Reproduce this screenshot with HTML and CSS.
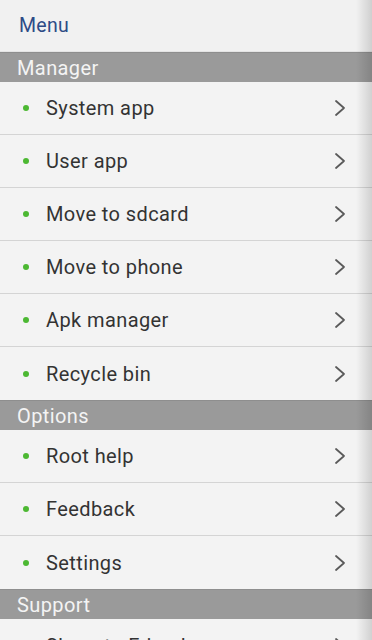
FILE: index.html
```html
<!DOCTYPE html>
<html lang="en">
<head>
    <meta charset="UTF-8">
    <meta name="viewport" content="width=device-width, initial-scale=1.0">
    <title>Menu</title>
    <link rel="stylesheet" href="styles.css">
</head>
<body>
    <div class="drawer">
        <div class="drawer-title">Menu</div>

        <div class="section">Manager</div>
        <ul class="menu">
            <li class="item"><span class="dot"></span><span class="label">System app</span><svg class="chevron" viewBox="0 0 12 18"><path d="M2 2 L10 9 L2 16"/></svg></li>
            <li class="item"><span class="dot"></span><span class="label">User app</span><svg class="chevron" viewBox="0 0 12 18"><path d="M2 2 L10 9 L2 16"/></svg></li>
            <li class="item"><span class="dot"></span><span class="label">Move to sdcard</span><svg class="chevron" viewBox="0 0 12 18"><path d="M2 2 L10 9 L2 16"/></svg></li>
            <li class="item"><span class="dot"></span><span class="label">Move to phone</span><svg class="chevron" viewBox="0 0 12 18"><path d="M2 2 L10 9 L2 16"/></svg></li>
            <li class="item"><span class="dot"></span><span class="label">Apk manager</span><svg class="chevron" viewBox="0 0 12 18"><path d="M2 2 L10 9 L2 16"/></svg></li>
            <li class="item"><span class="dot"></span><span class="label">Recycle bin</span><svg class="chevron" viewBox="0 0 12 18"><path d="M2 2 L10 9 L2 16"/></svg></li>
        </ul>

        <div class="section">Options</div>
        <ul class="menu">
            <li class="item"><span class="dot"></span><span class="label">Root help</span><svg class="chevron" viewBox="0 0 12 18"><path d="M2 2 L10 9 L2 16"/></svg></li>
            <li class="item"><span class="dot"></span><span class="label">Feedback</span><svg class="chevron" viewBox="0 0 12 18"><path d="M2 2 L10 9 L2 16"/></svg></li>
            <li class="item"><span class="dot"></span><span class="label">Settings</span><svg class="chevron" viewBox="0 0 12 18"><path d="M2 2 L10 9 L2 16"/></svg></li>
        </ul>

        <div class="section">Support</div>
        <ul class="menu">
            <li class="item"><span class="dot"></span><span class="label">Share to Friends</span><svg class="chevron" viewBox="0 0 12 18"><path d="M2 2 L10 9 L2 16"/></svg></li>
        </ul>
    </div>
</body>
</html>
```

FILE: styles.css
```css
body {
    margin: 0;
    font-family: Roboto, 'Noto Sans', sans-serif;
    background-color: #f2f2f2;
    overflow: hidden;
}
.drawer {
    position: relative;
    width: 372px;
    min-height: 640px;
    background-color: #f2f2f2;
}
/* edge shadow of the sliding drawer */
.drawer::after {
    content: '';
    position: absolute;
    top: 0;
    right: 0;
    bottom: 0;
    width: 16px;
    background: linear-gradient(90deg, rgba(0, 0, 0, 0), rgba(0, 0, 0, 0.14));
    pointer-events: none;
}
.drawer-title {
    height: 52px;
    box-sizing: border-box;
    padding-left: 19px;
    display: flex;
    align-items: center;
    font-size: 19.5px;
    letter-spacing: 0.3px;
    color: #2d4b86;
    background-color: #f1f1f1;
    border-bottom: 1px solid #e4e4e4;
}
.section {
    height: 30px;
    box-sizing: border-box;
    padding-left: 17px;
    display: flex;
    align-items: center;
    font-size: 20px;
    letter-spacing: 0.4px;
    color: #f4f4f4;
    background-color: #9a9a9a;
    border-top: 1px solid #8e8e8e;
}
.menu {
    list-style: none;
    margin: 0;
    padding: 0;
}
.item {
    height: 53px;
    box-sizing: border-box;
    display: flex;
    align-items: center;
    padding-left: 23px;
    padding-right: 26px;
    border-bottom: 1px solid #d4d4d4;
    background-color: #f3f3f3;
}
.menu .item:last-child {
    border-bottom: none;
}
.dot {
    width: 6px;
    height: 6px;
    border-radius: 50%;
    background-color: #4cb832;
    margin-right: 17px;
}
.label {
    flex: 1;
    font-size: 20px;
    letter-spacing: 0.4px;
    color: #333333;
}
.chevron {
    width: 12px;
    height: 18px;
    fill: none;
    stroke: #5a5a5a;
    stroke-width: 1.8;
    stroke-linecap: round;
    stroke-linejoin: round;
}
```
